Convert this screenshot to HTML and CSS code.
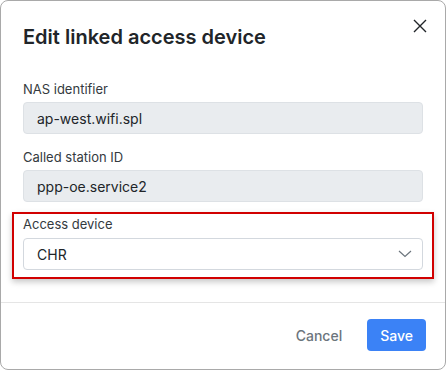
FILE: index.html
```html
<!DOCTYPE html>
<html lang="en">
<head>
  <meta charset="UTF-8">
  <title>Edit linked access device</title>
  <link rel="stylesheet" href="styles.css">
</head>
<body>
  <div class="dialog">
    <div class="dialog-header">
      <h2>Edit linked access device</h2>
      <button class="close-btn" aria-label="Close">
        <svg width="14" height="14" viewBox="0 0 14 14"><path d="M1 1L13 13M13 1L1 13" stroke="#212529" stroke-width="1.4" fill="none"/></svg>
      </button>
    </div>

    <div class="dialog-body">
      <div class="field">
        <label>NAS identifier</label>
        <div class="input readonly">ap-west.wifi.spl</div>
      </div>
      <div class="field">
        <label>Called station ID</label>
        <div class="input readonly">ppp-oe.service2</div>
      </div>
      <!-- highlighted field -->
      <div class="field highlight">
        <label>Access device</label>
        <div class="input select">
          <span>CHR</span>
          <svg width="14" height="8" viewBox="0 0 14 8"><path d="M1 1L7 6.5L13 1" stroke="#6c757d" stroke-width="1.2" fill="none"/></svg>
        </div>
      </div>
    </div>

    <div class="dialog-footer">
      <button class="btn btn-cancel">Cancel</button>
      <button class="btn btn-save">Save</button>
    </div>
  </div>
</body>
</html>
```

FILE: styles.css
```css
html, body {
  margin: 0;
  padding: 0;
}

* {
  box-sizing: border-box;
}

body {
  font-family: Inter, "Noto Sans", sans-serif;
  color: #212529;
  background-color: #fff;
}

.dialog {
  width: 446px;
  height: 370px;
  border: 1px solid #a9a9a9;
  border-radius: 8px;
  display: flex;
  flex-direction: column;
  background-color: #fff;
}

.dialog-header {
  display: flex;
  justify-content: space-between;
  align-items: flex-start;
  padding: 22px 18px 0 22px;
}
.dialog-header h2 {
  margin: 0;
  font-size: 20px;
  line-height: 28px;
  font-weight: 600;
  color: #212529;
}
.close-btn {
  border: none;
  background: none;
  padding: 0;
  margin-top: -4px;
  width: 14px;
  height: 14px;
  cursor: pointer;
}
.close-btn svg {
  display: block;
}

.dialog-body {
  padding: 0 22px 23px;
  flex: 1;
}

.field {
  margin-top: 14px;
}
.field:first-child {
  margin-top: 29px;
}
.field label {
  display: block;
  font-size: 13px;
  line-height: 18px;
  color: #343a40;
  margin-bottom: 4px;
}

.input {
  height: 32px;
  border: 1px solid #ced4da;
  border-radius: 4px;
  padding: 0 13px;
  font-size: 14px;
  display: flex;
  align-items: center;
  color: #212529;
}
.input.readonly {
  background-color: #e9ecef;
  border-color: #dde1e5;
}
.input.select {
  justify-content: space-between;
  background-color: #fff;
  border-color: #d3d8de;
  padding-right: 10px;
}

.highlight {
  margin: 10px -11px 0;
  padding: 1px 9px 7px;
  border: 2px solid #d10000;
  box-shadow: 0 3px 6px rgba(0, 0, 0, 0.22);
}
.highlight label {
  margin-bottom: 5px;
}

.dialog-footer {
  border-top: 1px solid #e5e5e5;
  display: flex;
  justify-content: flex-end;
  gap: 12px;
  padding: 16px 19px 0 0;
  height: 67px;
}

.btn {
  height: 32px;
  padding: 0 13px;
  border: none;
  border-radius: 4px;
  font-family: inherit;
  font-size: 14px;
  font-weight: 500;
  cursor: pointer;
}
.btn-cancel {
  background: none;
  color: #6c757d;
}
.btn-save {
  background-color: #3b82f6;
  color: #fff;
}
```
